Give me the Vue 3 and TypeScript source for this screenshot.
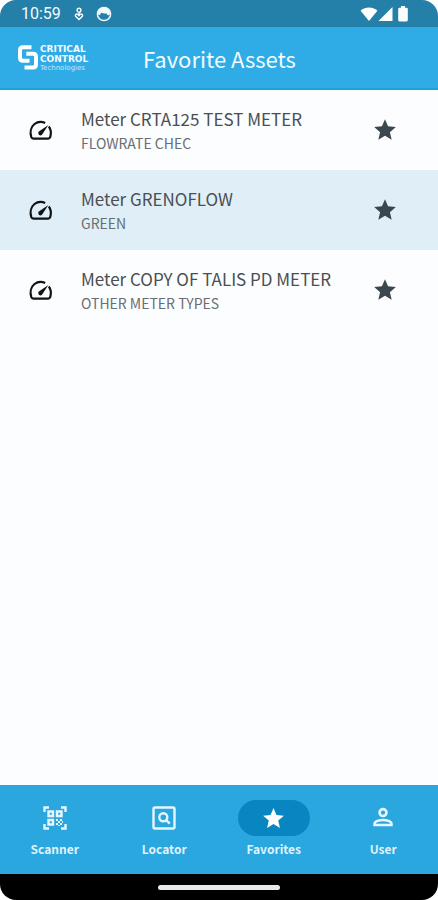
<script setup lang="ts">
interface Asset {
  name: string
  type: string
}

interface Tab {
  id: string
  label: string
}

const assets: Asset[] = [
  { name: 'Meter CRTA125 TEST METER', type: 'FLOWRATE CHEC' },
  { name: 'Meter GRENOFLOW', type: 'GREEN' },
  { name: 'Meter COPY OF TALIS PD METER', type: 'OTHER METER TYPES' },
]

const tabs: Tab[] = [
  { id: 'scanner', label: 'Scanner' },
  { id: 'locator', label: 'Locator' },
  { id: 'favorites', label: 'Favorites' },
  { id: 'user', label: 'User' },
]

const activeTab = 'favorites'
const starPath = 'M12 17.27 18.18 21l-1.64-7.03L22 9.24l-7.19-.61L12 2 9.19 8.63 2 9.24l5.46 4.73L5.82 21z'
</script>

<template>
  <div class="screen">
    <div class="status">
      <span class="clock">10:59</span>
      <svg class="status-icon" viewBox="0 0 14 14" aria-hidden="true">
        <circle cx="7" cy="3.2" r="1.9" />
        <path d="M7 5.200V9M7 12.600 3.600 9.300C2.800 8 4.300 6.200 5.800 7.300L7 8.700l1.200-1.400C9.700 6.200 11.200 8 10.400 9.300z" />
      </svg>
      <svg class="face-icon" viewBox="0 0 16 16" aria-hidden="true">
        <circle cx="8" cy="8" r="6.6" fill="none" stroke="currentColor" stroke-width="1.5" />
        <path d="M2 7C2.600 3.400 5 1.600 8 1.600S13.500 3.400 14 7c0 1.300-.8 2.300-1.800 2.300-.7 0-1.200-1.300-1.700-1.900C9.500 8 6.500 7.200 5 6.400 4.800 8.200 4 9 3 9 2.300 9 2 8 2 7z" fill="currentColor" />
      </svg>
      <div class="signals">
        <svg width="18" height="16" viewBox="0 0 18 16" aria-hidden="true">
          <path d="M.6 4.800C5.500.4 12.500.4 17.400 4.800L9 15z" />
        </svg>
        <svg width="15" height="16" viewBox="0 0 15 16" aria-hidden="true">
          <path d="M14.500 1v14H.5z" />
        </svg>
        <svg class="battery" width="10" height="16" viewBox="0 0 10 16" aria-hidden="true">
          <path d="M3 0h4v1.800h1.500q1.300 0 1.300 1.300v11q0 1.300-1.300 1.300h-7Q.2 15.400.2 14.100v-11q0-1.300 1.300-1.300H3z" />
        </svg>
      </div>
    </div>

    <header class="bar">
      <div class="logo">
        <svg width="20" height="25" viewBox="0 0 20 25" aria-hidden="true">
          <path d="M13.500 2.200H5Q2 2.200 2 5.200v7.500Q2 15.700 5 15.700H11.500" />
          <path d="M6.500 22.600H15Q18 22.600 18 19.600V11.700Q18 8.700 15 8.700H8.300" />
        </svg>
        <div class="brand">
          <span class="brand-name">CRITICAL</span>
          <span class="brand-name">CONTROL</span>
          <span class="brand-sub">Technologies</span>
        </div>
      </div>
      <h1>Favorite Assets</h1>
    </header>

    <main>
      <ul class="list">
        <li v-for="asset in assets" :key="asset.name" class="row">
          <svg class="gauge" viewBox="0 0 27 27" aria-hidden="true">
            <path class="dial" d="M18.200 6C15 4.500 10.500 4.700 7.500 7 3.800 10 2.800 15.500 4.300 20.200Q4.800 21.600 6.300 21.600H21.200Q22.700 21.600 23.200 20.200C24.300 16.500 24.100 12.500 21.800 9.500" />
            <path d="M11.900 17.700a2.200 2.200 0 0 0 3.100 0l6.400-9.600-9.500 6.500a2.200 2.200 0 0 0 0 3.100z" />
          </svg>
          <div class="text">
            <span class="name">{{ asset.name }}</span>
            <span class="type">{{ asset.type }}</span>
          </div>
          <button class="fav" type="button" :aria-label="`Remove ${asset.name} from favorites`">
            <svg width="26" height="26" viewBox="0 0 24 24" aria-hidden="true"><path :d="starPath" /></svg>
          </button>
        </li>
      </ul>
    </main>

    <nav class="tabs">
      <button
        v-for="tab in tabs"
        :key="tab.id"
        type="button"
        class="tab"
        :class="{ active: tab.id === activeTab }"
      >
        <span class="pill">
          <svg v-if="tab.id === 'scanner'" width="24" height="24" viewBox="0 0 24 24" aria-hidden="true">
            <path class="line" d="M1.500 6V1.500H6M18 1.500h4.500V6M22.500 18v4.500H18M6 22.500H1.500V18" />
            <path class="line" d="M5.500 5.500h4.500V10H5.500zM14 5.500h4.500V10H14zM5.500 14h4.500v4.500H5.500z" />
            <path d="M13 13h2v2h-2zM15 15h2v2h-2zM17 13h2v2h-2zM13 17h2v2h-2zM17 17h2v2h-2zM19 15h1v2h-1zM15 19h2v1h-2z" />
          </svg>
          <svg v-else-if="tab.id === 'locator'" width="24" height="24" viewBox="0 0 24 24" aria-hidden="true">
            <rect class="line" x="1.500" y="1.500" width="21" height="21" rx="1.500" />
            <circle class="line" cx="11.300" cy="11.300" r="4" />
            <path class="line" d="M14.200 14.200l3.500 3.500" />
          </svg>
          <svg v-else-if="tab.id === 'favorites'" width="25" height="25" viewBox="0 0 24 24" aria-hidden="true">
            <path :d="starPath" />
          </svg>
          <svg v-else width="26" height="26" viewBox="0 0 24 24" aria-hidden="true">
            <circle class="line" cx="12" cy="7" r="3.200" />
            <path class="line" d="M4.200 18.500v-1.300c0-2.200 4.600-3.400 7.800-3.400s7.800 1.200 7.800 3.400v1.300z" />
          </svg>
        </span>
        <span>{{ tab.label }}</span>
      </button>
    </nav>

    <div class="system"><span class="handle"></span></div>
  </div>
</template>

<style>
body {
  background: #ffffff;
}
</style>

<style scoped>
.screen {
  display: flex;
  flex-direction: column;
  min-height: 100vh;
  border-radius: 16px;
  overflow: hidden;
  background: #fcfdff;
  font-family: "Noto Sans CJK SC", "Noto Sans", sans-serif;
}

.status {
  display: flex;
  align-items: center;
  height: 27px;
  padding: 0 30px 0 21px;
  background: #247fa9;
  color: #f4fbff;
}

.clock {
  font: 400 16px/27px Roboto, sans-serif;
}

.status-icon {
  width: 14px;
  height: 14px;
  margin-left: 11px;
  fill: none;
  stroke: currentColor;
  stroke-width: 1.4;
}

.face-icon {
  width: 16px;
  height: 16px;
  margin-left: 10px;
}

.signals {
  display: flex;
  align-items: center;
  margin-left: auto;
  fill: #ffffff;
}

.battery {
  margin-left: 5px;
}

.bar {
  display: flex;
  align-items: center;
  height: 61px;
  padding: 0 18px;
  border-bottom: 2px solid #1ba3db;
  background: #2fabe5;
  color: #f4fbff;
}

.logo {
  display: flex;
  align-items: center;
  width: 125px;
}

.logo svg {
  fill: none;
  stroke: #ffffff;
  stroke-width: 4;
}

.brand {
  display: flex;
  flex-direction: column;
  padding-left: 2px;
}

.brand-name {
  font: 700 9px/10px "DejaVu Sans", sans-serif;
}

.brand-sub {
  color: #c4e8f9;
  font: 400 7px/8px "DejaVu Sans", sans-serif;
}

h1 {
  margin: 0;
  font-size: 22px;
  font-weight: 400;
  line-height: 32px;
}

main {
  flex: 1;
}

.list {
  margin: 0;
  padding: 0;
  list-style: none;
}

.row {
  display: flex;
  align-items: center;
  height: 80px;
  padding: 0 40px 0 27px;
}

.row:nth-child(even) {
  background: #e0eef7;
}

.gauge {
  flex: none;
  width: 27px;
  height: 27px;
  fill: #101314;
}

.dial {
  fill: none;
  stroke: #101314;
  stroke-width: 2.2;
}

.text {
  display: flex;
  flex: 1;
  flex-direction: column;
  min-width: 0;
  padding-left: 27px;
}

.name {
  color: #4a4f52;
  font-size: 17px;
  line-height: 26px;
}

.type {
  color: #686e72;
  font-size: 14px;
  line-height: 22px;
}

button {
  border: 0;
  background: none;
  cursor: pointer;
  font-family: inherit;
}

.fav {
  display: flex;
  padding: 0;
  fill: #3b474d;
}

.tabs {
  display: grid;
  grid-template-columns: repeat(4, 1fr);
  height: 89px;
  background: #2ba7e0;
}

.tab {
  display: flex;
  flex-direction: column;
  align-items: center;
  gap: 3px;
  padding: 15px 0 0;
  color: #dff3fc;
  font-size: 12px;
  font-weight: 700;
  line-height: 20px;
}

.pill {
  display: flex;
  align-items: center;
  justify-content: center;
  width: 72px;
  height: 36px;
  border-radius: 18px;
  color: #e6f6fe;
  fill: currentColor;
}

.active .pill {
  background: #0786c2;
  color: #ffffff;
}

.line {
  fill: none;
  stroke: currentColor;
  stroke-width: 2.4;
}

.system {
  display: flex;
  align-items: center;
  justify-content: center;
  height: 26px;
  background: #000000;
}

.handle {
  width: 122px;
  height: 5px;
  border-radius: 3px;
  background: #e8e8e8;
}
</style>
